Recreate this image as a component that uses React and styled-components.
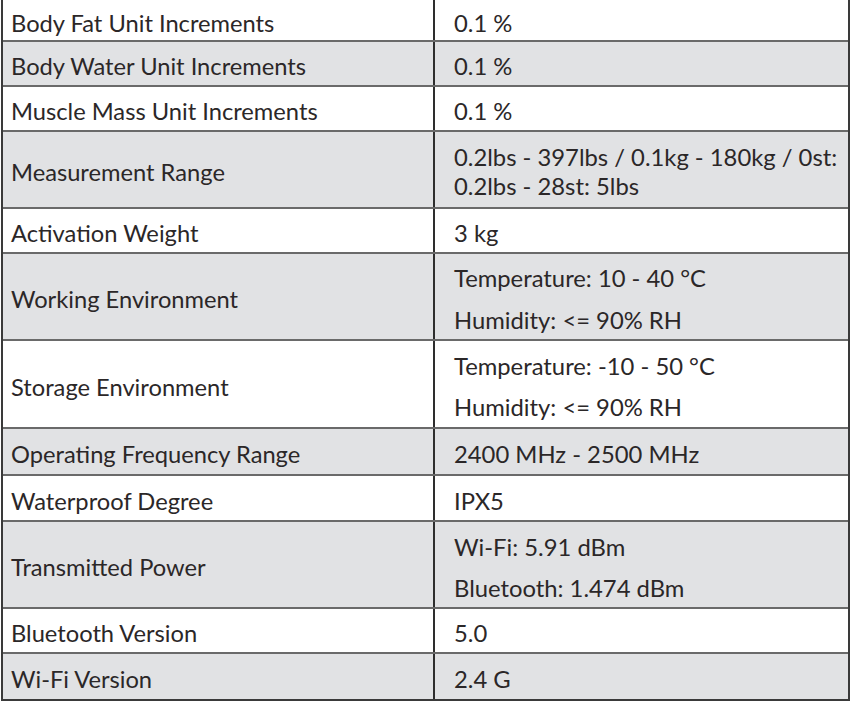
import React from "react";
import styled, { createGlobalStyle } from "styled-components";

const Global = createGlobalStyle`
  html, body { margin: 0; padding: 0; background: #ffffff; }
  body { font-family: Lato, "Open Sans", sans-serif; color: #2b2728; }
`;

const Table = styled.div`
  width: 849px;
  margin-left: 1px;
  border-left: 2px solid #3a3a3a;
  border-right: 2px solid #3a3a3a;
  border-bottom: 2px solid #3a3a3a;
  box-sizing: border-box;
`;

const Row = styled.div`
  display: grid;
  grid-template-columns: 432px 1fr;
  height: ${(p) => p.$h}px;
  box-sizing: border-box;
  background: ${(p) => (p.$shade ? "#e1e2e4" : "#ffffff")};
  border-bottom: ${(p) => (p.$last ? "none" : "2px solid #6a6a6a")};
`;

const Label = styled.div`
  display: flex;
  align-items: center;
  padding: 5px 0 0 8px;
  border-right: 2px solid #2e2e2e;
  font-size: 23.7px;
  white-space: nowrap;
`;

const Value = styled.div`
  display: flex;
  flex-direction: column;
  justify-content: center;
  padding: 5px 0 0 19px;
  font-size: 23.8px;
  gap: ${(p) => p.$gap || 0}px;
`;

const Line = styled.div`
  line-height: ${(p) => p.$lh || 28}px;
  white-space: nowrap;
`;

const rows = [
  { label: "Body Fat Unit Increments", values: ["0.1 %"], h: 42 },
  { label: "Body Water Unit Increments", values: ["0.1 %"], h: 45 },
  { label: "Muscle Mass Unit Increments", values: ["0.1 %"], h: 45 },
  {
    label: "Measurement Range",
    values: ["0.2lbs - 397lbs / 0.1kg - 180kg / 0st:", "0.2lbs - 28st: 5lbs"],
    h: 77,
    lh: 29,
  },
  { label: "Activation Weight", values: ["3 kg"], h: 45 },
  {
    label: "Working Environment",
    values: ["Temperature: 10 - 40 °C", "Humidity: <= 90% RH"],
    h: 87,
    lh: 28,
    gap: 14,
  },
  {
    label: "Storage Environment",
    values: ["Temperature: -10 - 50 °C", "Humidity: <= 90% RH"],
    h: 88,
    lh: 28,
    gap: 13,
  },
  { label: "Operating Frequency Range", values: ["2400 MHz - 2500 MHz"], h: 47 },
  { label: "Waterproof Degree", values: ["IPX5"], h: 46 },
  {
    label: "Transmitted Power",
    values: ["Wi-Fi: 5.91 dBm", "Bluetooth: 1.474 dBm"],
    h: 87,
    lh: 28,
    gap: 13,
  },
  { label: "Bluetooth Version", values: ["5.0"], h: 45 },
  { label: "Wi-Fi Version", values: ["2.4 G"], h: 45 },
];

export default function App() {
  return (
    <>
      <Global />
      <Table>
        {rows.map((r, i) => (
          <Row key={r.label} $h={r.h} $shade={i % 2 === 1} $last={i === rows.length - 1}>
            <Label>{r.label}</Label>
            <Value $gap={r.gap}>
              {r.values.map((v) => (
                <Line key={v} $lh={r.lh}>
                  {v}
                </Line>
              ))}
            </Value>
          </Row>
        ))}
      </Table>
    </>
  );
}
